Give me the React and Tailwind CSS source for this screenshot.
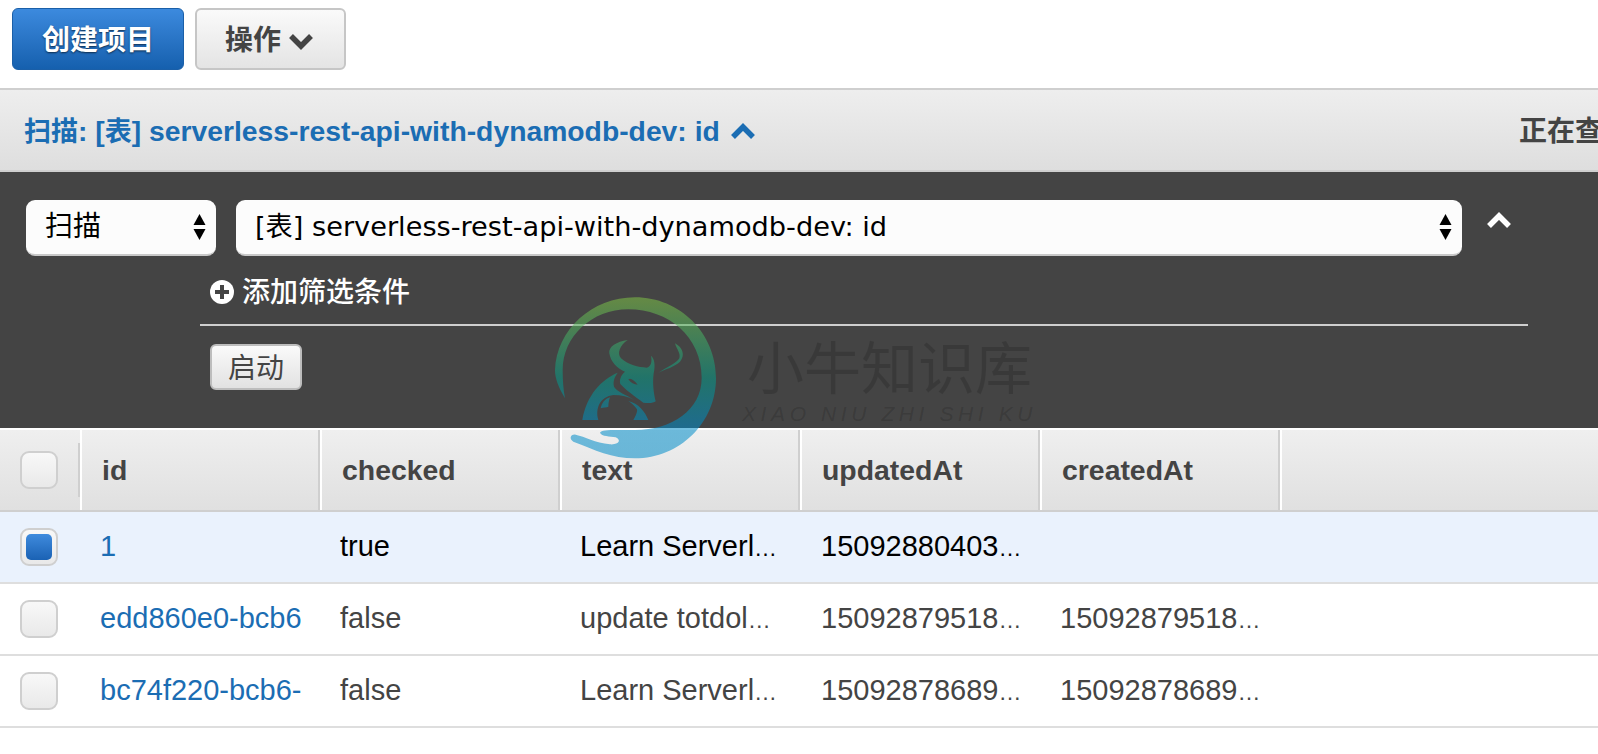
const font = 'font-["Liberation_Sans","Noto_Sans_CJK_SC",sans-serif]';

const columns = ['id', 'checked', 'text', 'updatedAt', 'createdAt'];

const rows = [
  { id: '1', checked: 'true', text: 'Learn Serverl', updatedAt: '15092880403', createdAt: '', selected: true },
  { id: 'edd860e0-bcb6', checked: 'false', text: 'update totdol', updatedAt: '15092879518', createdAt: '15092879518' },
  { id: 'bc74f220-bcb6-', checked: 'false', text: 'Learn Serverl', updatedAt: '15092878689', createdAt: '15092878689' },
];

function Stepper() {
  return (
    <svg width="13" height="28" viewBox="0 0 13 28" className="shrink-0">
      <path d="M6.5 1 L12.5 12 L0.5 12 Z" fill="#000" />
      <path d="M6.5 27 L12.5 16 L0.5 16 Z" fill="#000" />
    </svg>
  );
}

// thick square-ended chevron, same as the console's glyph
function Chevron({ up, color, className }) {
  return (
    <svg width="26" height="17" viewBox="0 0 26 17" className={className}>
      <path d={up ? 'M3 14 L13 4 L23 14' : 'M3 3 L13 13 L23 3'} fill="none" stroke={color} strokeWidth="5.5" />
    </svg>
  );
}

function Checkbox({ checked }) {
  return (
    <div className="w-[38px] h-[38px] rounded-[9px] border-2 border-[#cfcfcf] bg-gradient-to-b from-[#f8f8f8] to-[#e9e9e9] flex items-center justify-center">
      {checked && <div className="w-[26px] h-[26px] rounded-[5px] bg-gradient-to-b from-[#3f8bdd] to-[#1a62b4]" />}
    </div>
  );
}

// cut-off cell: the browser's … is too wide in this font, so it gets a smaller size
function Cut({ value }) {
  if (!value) return null;
  return <>{value}<span className="text-[23px]">…</span></>;
}

function Watermark() {
  return (
    <div className="absolute left-[545px] top-[290px] w-[510px] h-[180px] pointer-events-none">
      <svg width="180" height="180" viewBox="0 0 540 540" className="absolute left-0 top-0">
        <defs>
          <linearGradient id="wm" gradientUnits="userSpaceOnUse" x1="0" y1="22" x2="0" y2="505">
            <stop offset="0" stopColor="#81c345" />
            <stop offset="0.5" stopColor="#059b88" />
            <stop offset="0.8" stopColor="#008cc8" />
            <stop offset="1" stopColor="#008cc8" />
          </linearGradient>
        </defs>
        <g fill="url(#wm)" fillOpacity="0.55" fillRule="evenodd">
          <path d="M60 325 C40 290 30 265 30 240 C35 120 140 22 270 22 C405 22 513 130 513 264 C513 398 405 505 270 505 C200 505 150 480 85 455 C72 448 75 432 92 434 C120 440 150 458 195 463 C222 465 230 450 212 442 C195 438 170 440 165 428 C170 418 200 420 270 420 C380 420 470 360 470 264 C470 140 370 58 250 58 C140 58 53 140 53 240 C53 270 55 300 60 325 Z" />
          <path d="M248 150 C215 155 190 170 193 190 C197 215 215 235 240 245 C228 255 222 270 226 282 C240 298 270 320 295 338 C310 340 325 340 332 334 C326 310 322 280 326 250 C332 225 328 205 318 197 C322 215 318 230 305 233 C280 232 250 225 228 205 C215 190 225 165 248 150 Z M250 268 C256 262 268 270 278 284 C268 284 256 278 250 268 Z" />
          <path d="M390 160 C412 172 422 195 405 215 C390 230 360 238 340 248 C365 232 395 220 403 205 C408 190 395 178 390 160 Z" />
          <path d="M218 248 C170 268 125 315 112 390 L160 390 C150 355 165 320 205 315 C230 315 250 320 268 330 C245 315 215 305 207 290 C203 272 210 260 218 248 Z" />
          <path d="M195 322 C180 326 170 340 167 355 C175 352 185 352 190 350 C190 340 192 330 195 322 Z" />
          <path d="M250 333 C280 340 300 365 310 390 L265 390 C272 378 278 365 276 358 C270 348 260 340 250 333 Z" />
        </g>
      </svg>
      <div className="absolute left-[202px] top-[39px] text-[57px] leading-[70px] font-normal text-black/15 font-['Noto_Sans_CJK_SC',sans-serif] whitespace-nowrap">小牛知识库</div>
      <div className="absolute left-[197px] top-[112px] text-[21px] leading-[24px] italic tracking-[4.6px] text-black/15 font-['Liberation_Sans',sans-serif] whitespace-nowrap">XIAO NIU ZHI SHI KU</div>
    </div>
  );
}

export default function App() {
  return (
    <div className={`relative w-[1598px] h-[754px] overflow-hidden bg-white ${font}`}>
      <div className="h-[88px] flex items-start gap-[11px] pl-3 pt-2">
        <button className="w-[172px] h-[62px] pt-[3px] rounded-[6px] border border-[#1a5fa8] bg-gradient-to-b from-[#3c8ade] to-[#1560ae] text-white text-[28px] font-bold [text-shadow:0_1px_2px_rgba(0,0,0,0.6)]">创建项目</button>
        <button className="w-[151px] h-[62px] pr-[2px] rounded-[6px] border-2 border-[#c6c6c6] bg-gradient-to-b from-[#fafafa] to-[#e4e4e4] text-[#444] text-[28px] font-bold flex items-center justify-center gap-[7px]">
          <span className="mt-[3px]">操作</span>
          <Chevron color="#444" className="mt-[4px]" />
        </button>
      </div>

      <div className="h-[84px] pt-[3px] border-t-2 border-b-2 border-[#cfcfcf] bg-gradient-to-b from-[#eeeeee] to-[#dedede] flex items-center justify-between pl-[24px]">
        <div className="flex items-center gap-[10px] text-[#1b6db3] text-[28.3px] font-bold">
          <span><span className="text-[27px]">扫描</span>: [<span className="text-[27px]">表</span>] serverless-rest-api-with-dynamodb-dev: id</span>
          <Chevron up color="#1b6db3" />
        </div>
        <div className="w-[79px] overflow-hidden whitespace-nowrap text-[#444] text-[28px] font-bold">正在查询</div>
      </div>

      <div className="h-[256px] bg-[#444444] pt-[28px] pl-[26px]">
        <div className="flex items-start gap-[20px]">
          <div className="w-[190px] h-[56px] rounded-[9px] bg-[#fcfcfc] border-b-2 border-[#c8c8c8] flex items-center justify-between pl-[19px] pr-[10px] text-[28px] text-black">
            <span>扫描</span>
            <Stepper />
          </div>
          <div className="w-[1226px] h-[56px] rounded-[9px] bg-[#fcfcfc] border-b-2 border-[#c8c8c8] flex items-center justify-between pl-[19px] pr-[10px] text-[27.2px] text-black font-['DejaVu_Sans','Noto_Sans_CJK_SC',sans-serif]">
            <span>[表] serverless-rest-api-with-dynamodb-dev: id</span>
            <Stepper />
          </div>
          <Chevron up color="#fff" className="ml-[4px] mt-[12px]" />
        </div>
        <div className="ml-[184px] mt-[15px] flex items-center gap-[8px] text-white text-[28px] font-medium h-[42px]">
          <svg width="24" height="24" viewBox="0 0 24 24">
            <circle cx="12" cy="12" r="12" fill="#fff" />
            <path d="M10 5h4v5h5v4h-5v5h-4v-5H5v-4h5z" fill="#444" />
          </svg>
          <span className="mt-[2px]">添加筛选条件</span>
        </div>
        <div className="ml-[174px] mt-[11px] w-[1328px] h-[2px] bg-[#cfcfcf]" />
        <button className="ml-[184px] mt-[18px] w-[92px] h-[46px] pt-[3px] rounded-[6px] border-2 border-[#bdbdbd] bg-gradient-to-b from-[#fafafa] to-[#e2e2e2] text-[#444] text-[28px] leading-none">启动</button>
      </div>

      <div className="h-[84px] pt-[2px] border-b-2 border-[#cfcfcf] flex bg-white">
        <div className="w-[80px] h-[80px] bg-gradient-to-b from-[#efefef] to-[#e0e0e0] flex items-center justify-between pl-[20px]">
          <Checkbox />
          <div className="w-[2px] h-[54px] bg-[#cfcfcf]" />
        </div>
        {columns.map((c) => (
          <div key={c} className="w-[240px] h-[80px] flex items-center pl-[20px] border-l-2 border-r-2 border-l-white border-r-[#cfcfcf] text-[#444] text-[28.4px] font-bold bg-gradient-to-b from-[#efefef] to-[#e0e0e0]">
            <span className="mt-[1px]">{c}</span>
          </div>
        ))}
        <div className="flex-1 h-[80px] border-l-2 border-white bg-gradient-to-b from-[#efefef] to-[#e0e0e0]" />
      </div>

      {rows.map((r) => (
        <div key={r.id} className={`h-[72px] flex items-center border-b-2 border-[#dedede] text-[29px] whitespace-nowrap ${r.selected ? 'bg-[#eaf2fd] text-black' : 'bg-white text-[#444]'}`}>
          <div className="w-[80px] pl-[20px]"><Checkbox checked={r.selected} /></div>
          <div className="w-[240px] pl-[20px] overflow-hidden text-[#1b6db3]">{r.id}</div>
          <div className="w-[240px] pl-[20px]">{r.checked}</div>
          <div className="w-[240px] pl-[20px]"><Cut value={r.text} /></div>
          <div className="w-[240px] pl-[21px]"><Cut value={r.updatedAt} /></div>
          <div className="w-[240px] pl-[20px]"><Cut value={r.createdAt} /></div>
        </div>
      ))}

      <Watermark />
    </div>
  );
}
